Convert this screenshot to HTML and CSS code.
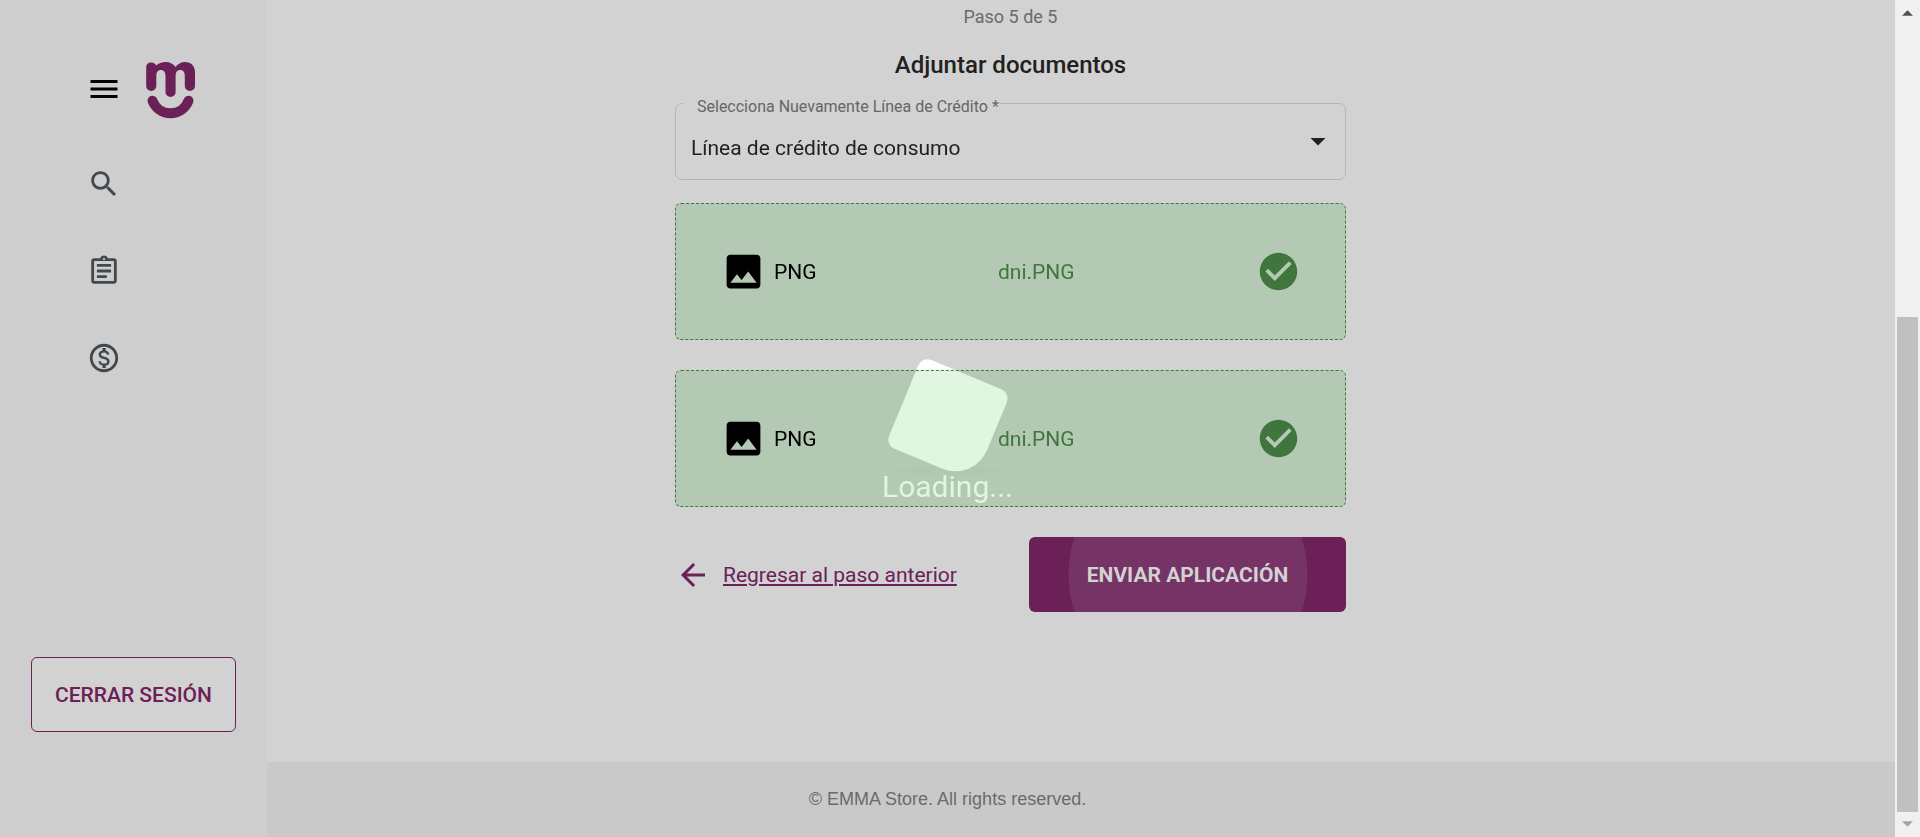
FILE: index.html
```html
<!DOCTYPE html>
<html lang="es">
<head>
<meta charset="utf-8">
<title>EMMA Store</title>
<link rel="stylesheet" href="styles.css">
</head>
<body>
<aside class="sidebar">
  <div class="brand">
    <button class="icon-button" type="button" aria-label="Menú"><svg class="menu-icon" viewBox="0 0 24 24"><path d="M3 18h18v-2H3v2zm0-5h18v-2H3v2zm0-7v2h18V6H3z"/></svg></button>
    <svg class="logo" viewBox="0 0 50 57" role="img" aria-label="EMMA">
      <path d="M.2 5.500C.2 2 2.200.5 5.200.5C8 .5 9.700 2 10.200 3.500C12.500 1.500 16 0 20 0C24 0 27.500 2 29.500 5C31.500 2 35 0 39 0C45 0 49 4 49 10V24a5 5 0 0 1-10.200 0V14C38.800 10 37 8 34.200 8S29.600 10 29.600 14V30a5 5 0 0 1-10.100 0V14C19.500 10 17.500 8 14.800 8S10.300 10 10.300 14V24a5 5 0 0 1-10.100 0z"/>
      <path d="M6.500 38.700C13 55.500 36 55.500 42.500 38.700" fill="none" stroke="currentColor" stroke-width="10" stroke-linecap="round"/>
    </svg>
  </div>
  <nav class="nav">
    <a href="#" aria-label="Buscar"><svg viewBox="0 0 24 24"><path d="M15.500 14h-.79l-.28-.27C15.410 12.590 16 11.110 16 9.500 16 5.910 13.090 3 9.500 3S3 5.910 3 9.500 5.910 16 9.500 16c1.610 0 3.090-.59 4.230-1.570l.27.28v.79l5 4.990L20.490 19l-4.990-5zm-6 0C7.010 14 5 11.990 5 9.500S7.010 5 9.500 5 14 7.010 14 9.500 11.990 14 9.500 14z"/></svg></a>
    <a href="#" aria-label="Solicitudes"><svg viewBox="0 0 24 24"><path d="M7 15h7v2H7zm0-4h10v2H7zm0-4h10v2H7zm12-4h-4.180C14.400 1.840 13.300 1 12 1c-1.300 0-2.400.84-2.820 2H5c-.14 0-.27.010-.4.040-.39.080-.74.280-1.010.55-.18.180-.33.400-.43.640-.1.230-.16.490-.16.770v14c0 .27.060.54.160.78s.25.450.43.640c.27.270.62.470 1.010.55.130.020.260.030.4.030h14c1.100 0 2-.9 2-2V5c0-1.100-.9-2-2-2zm-7-.25c.41 0 .75.340.75.750s-.34.750-.75.750-.75-.34-.75-.75.340-.75.750-.75zM19 19H5V5h14v14z"/></svg></a>
    <a href="#" aria-label="Créditos"><svg viewBox="0 0 24 24"><path d="M12 2C6.480 2 2 6.480 2 12s4.480 10 10 10 10-4.480 10-10S17.520 2 12 2zm0 18c-4.410 0-8-3.590-8-8s3.590-8 8-8 8 3.590 8 8-3.590 8-8 8zm.31-8.860c-1.770-.45-2.340-.94-2.340-1.670 0-.84.790-1.430 2.100-1.430 1.380 0 1.900.66 1.940 1.640h1.710c-.05-1.340-.87-2.570-2.490-2.970V5H10.900v1.690c-1.510.32-2.720 1.300-2.720 2.810 0 1.790 1.490 2.690 3.660 3.210 1.950.46 2.340 1.150 2.340 1.870 0 .53-.39 1.390-2.100 1.390-1.600 0-2.230-.72-2.320-1.640H8.040c.1 1.700 1.360 2.660 2.860 2.970V19h2.340v-1.670c1.520-.29 2.720-1.160 2.730-2.770-.01-2.200-1.900-2.960-3.660-3.420z"/></svg></a>
  </nav>
  <button class="logout" type="button">CERRAR SESIÓN</button>
</aside>

<div class="page">
  <div class="loader" role="status">
    <div class="loader-art"><span class="loader-shadow"></span><span class="loader-square"></span></div>
    <p class="loader-text">Loading...</p>
  </div>
  <main class="main">
    <form class="form">
      <p class="step">Paso 5 de 5</p>
      <h1 class="title">Adjuntar documentos</h1>
      <div class="field">
        <label for="credit">Selecciona Nuevamente Línea de Crédito *</label>
        <select id="credit"><option>Línea de crédito de consumo</option></select>
        <svg class="arrow" viewBox="0 0 24 24"><path d="M7 10l5 5 5-5z"/></svg>
      </div>
      <div class="drop">
        <div class="drop-content">
          <span class="type"><svg viewBox="0 0 24 24"><path d="M21 19V5c0-1.100-.9-2-2-2H5c-1.100 0-2 .9-2 2v14c0 1.100.9 2 2 2h14c1.100 0 2-.9 2-2zM8.500 13.500l2.500 3.010L14.500 12l4.500 6H5l3.500-4.500z"/></svg>PNG</span>
          <span class="file">dni.PNG</span>
          <svg class="check" viewBox="0 0 24 24"><path d="M12 2C6.480 2 2 6.480 2 12s4.480 10 10 10 10-4.480 10-10S17.520 2 12 2zm-2 15l-5-5 1.410-1.410L10 14.170l7.590-7.590L19 8l-9 9z"/></svg>
        </div>
      </div>
      <div class="drop">
        <div class="drop-content">
          <span class="type"><svg viewBox="0 0 24 24"><path d="M21 19V5c0-1.100-.9-2-2-2H5c-1.100 0-2 .9-2 2v14c0 1.100.9 2 2 2h14c1.100 0 2-.9 2-2zM8.500 13.500l2.500 3.010L14.500 12l4.500 6H5l3.500-4.500z"/></svg>PNG</span>
          <span class="file">dni.PNG</span>
          <svg class="check" viewBox="0 0 24 24"><path d="M12 2C6.480 2 2 6.480 2 12s4.480 10 10 10 10-4.480 10-10S17.520 2 12 2zm-2 15l-5-5 1.410-1.410L10 14.170l7.590-7.590L19 8l-9 9z"/></svg>
        </div>
      </div>
      <div class="actions">
        <a class="back" href="#"><svg viewBox="0 0 24 24"><path d="M20 11H7.830l5.590-5.590L12 4l-8 8 8 8 1.410-1.410L7.830 13H20v-2z"/></svg><span>Regresar al paso anterior</span></a>
        <button class="submit" type="button"><span class="ripple"></span><span class="submit-label">ENVIAR APLICACIÓN</span></button>
      </div>
    </form>
  </main>
  <footer class="footer">© EMMA Store. All rights reserved.</footer>
</div>

<div class="scrollbar" aria-hidden="true">
  <svg class="scroll-up" viewBox="0 0 12 6"><path d="M0 6L6 0l6 6z"/></svg>
  <div class="thumb"></div>
  <svg class="scroll-down" viewBox="0 0 12 6"><path d="M0 0h12L6 6z"/></svg>
</div>
</body>
</html>
```
FILE: styles.css
```css
* { box-sizing: border-box; }

body {
  margin: 0;
  min-height: 100vh;
  display: flex;
  background: #d2d2d2;
  color: #212121;
  font-family: Roboto, "Liberation Sans", sans-serif;
  font-size: 21px;
}

p, h1 { margin: 0; }
svg { display: block; fill: currentColor; }
button { font: inherit; cursor: pointer; }

.sidebar {
  width: 267px;
  flex: none;
  display: flex;
  flex-direction: column;
  padding: 62px 31px 105px;
  background: #cecece;
}

.brand {
  display: flex;
  align-items: flex-start;
  gap: 24px;
  padding-left: 55px;
}

.icon-button {
  padding: 9px 0 0;
  border: 0;
  background: none;
  color: #000;
}

.menu-icon { width: 36px; height: 36px; }

.logo {
  width: 50px;
  height: 57px;
  color: #6b2058;
}

.nav {
  display: flex;
  flex-direction: column;
  gap: 53px;
  margin-top: 48px;
  padding-left: 56px;
  color: #42494e;
}

.nav a { color: inherit; }
.nav svg { width: 34px; height: 34px; }

.logout {
  height: 75px;
  margin-top: auto;
  border: 1px solid #6b2058;
  border-radius: 6px;
  background: #d2d2d2;
  color: #6b2058;
  font-weight: 500;
}

.page {
  flex: 1;
  min-width: 0;
  display: flex;
  flex-direction: column;
}

.main {
  flex: 1;
  display: flex;
  justify-content: center;
  padding: 5px 141px 0 0;
}

.form {
  width: 100%;
  max-width: 671px;
}

.step {
  color: #6b6b6b;
  font-size: 18px;
  line-height: 24px;
  text-align: center;
}

.title {
  margin-top: 20px;
  font-size: 24px;
  font-weight: 500;
  line-height: 32px;
  text-align: center;
}

.field {
  position: relative;
  margin-top: 22px;
}

.field label {
  position: absolute;
  top: -7px;
  left: 8px;
  padding: 0 0 0 14px;
  background: #d2d2d2;
  color: #666;
  font-size: 16px;
  line-height: 22px;
}

.field select {
  display: block;
  width: 100%;
  height: 77px;
  padding: 12px 60px 0 15px;
  border: 1px solid #b5b5b5;
  border-radius: 7px;
  appearance: none;
  background: none;
  color: #212121;
  font: inherit;
}

.arrow {
  position: absolute;
  top: 20px;
  right: 10px;
  width: 36px;
  height: 36px;
  pointer-events: none;
}

.drop {
  position: relative;
  margin-top: 30px;
  height: 137px;
}

.field + .drop { margin-top: 23px; }

/* Tints whatever lies behind the box, the loader included */
.drop::before {
  content: "";
  position: absolute;
  inset: 0;
  border-radius: 6px;
  background: #1f091f;
  mix-blend-mode: difference;
}

.drop-content {
  position: relative;
  display: flex;
  align-items: center;
  justify-content: space-between;
  height: 100%;
  padding: 0 44px 0 45px;
  border: 1px dashed #3f783e;
  border-radius: 6px;
}

.type {
  display: flex;
  align-items: center;
  gap: 8px;
  color: #000;
}

.type svg, .check { width: 45px; height: 45px; }
.file, .check { color: #40763d; }

.actions {
  display: flex;
  align-items: center;
  justify-content: space-between;
  margin-top: 30px;
}

.back {
  display: flex;
  align-items: center;
  gap: 12px;
  color: #6b2058;
}

.back svg { width: 36px; height: 36px; }

.submit {
  position: relative;
  width: 317px;
  height: 75px;
  overflow: hidden;
  border: 0;
  border-radius: 6px;
  background: #6b2058;
  color: #d2d2d2;
  font-weight: 700;
}

.ripple {
  position: absolute;
  top: 50%;
  left: 50%;
  width: 239px;
  height: 239px;
  border-radius: 50%;
  background: #763366;
  transform: translate(-50%, -50%);
}

.submit-label { position: relative; }

.footer {
  height: 75px;
  padding-right: 267px;
  background: #c9c9c9;
  color: #6b6b6b;
  font-family: "Liberation Sans", Arial, sans-serif;
  font-size: 18px;
  line-height: 75px;
  text-align: center;
}

.loader {
  position: fixed;
  inset: 0 25px 0 0;
  display: flex;
  flex-direction: column;
  align-items: center;
  justify-content: center;
  padding-top: 24px;
  color: #fff;
  pointer-events: none;
}

.loader-art {
  position: relative;
  width: 96px;
  height: 112px;
}

.loader-square {
  position: absolute;
  top: 13px;
  left: 0;
  width: 96px;
  height: 96px;
  border-radius: 10px 10px 34px 10px;
  background: #fff;
  transform: rotate(22.5deg);
}

.loader-shadow {
  position: absolute;
  top: 108px;
  left: -8px;
  width: 112px;
  height: 9px;
  border-radius: 50%;
  background: #cfd0cf;
}

.loader-text {
  position: relative;
  font-size: 30px;
  line-height: 34px;
}

.scrollbar {
  flex: none;
  width: 25px;
  height: 100vh;
  display: flex;
  flex-direction: column;
  align-items: center;
  padding: 10px 2px;
  background: #f0f0f0;
  color: #505050;
}

.scrollbar svg { width: 11px; height: 6px; }

.thumb {
  width: 21px;
  height: 495px;
  margin: auto 0 9px;
  background: #c0c0c0;
}

.scrollbar .scroll-down { color: #a3a3a3; }
```
